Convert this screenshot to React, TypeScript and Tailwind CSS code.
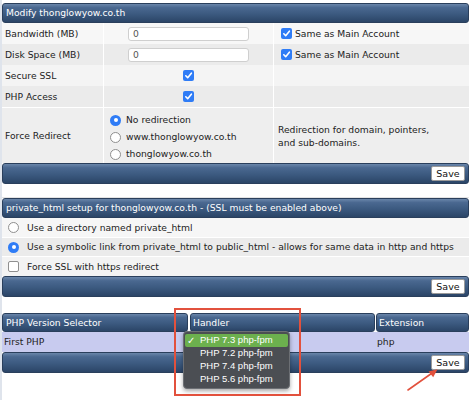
import React from "react";

const bar =
  "bg-[linear-gradient(to_bottom,#6a86aa_0%,#4a6890_20%,#3c5a80_55%,#2b4567_100%)] border border-[#2a3f5c] rounded-[3px]";

function Check({ on = true }: { on?: boolean }) {
  if (!on)
    return (
      <span className="inline-block w-[11px] h-[11px] rounded-[2px] bg-white border border-[#8f8f8f] shrink-0" />
    );
  return (
    <span className="inline-flex items-center justify-center w-[11px] h-[11px] rounded-[2px] bg-[#2f7cf6] shrink-0">
      <svg width="9" height="9" viewBox="0 0 10 10">
        <path d="M2 5.3 L4.1 7.4 L8.2 2.4" fill="none" stroke="white" strokeWidth="1.8" strokeLinecap="round" strokeLinejoin="round" />
      </svg>
    </span>
  );
}

function Radio({ on = false }: { on?: boolean }) {
  if (on)
    return (
      <span className="inline-flex items-center justify-center w-[11px] h-[11px] rounded-full bg-[#2f7cf6] shrink-0">
        <span className="w-[4px] h-[4px] rounded-full bg-white" />
      </span>
    );
  return <span className="inline-block w-[11px] h-[11px] rounded-full bg-white border border-[#8f8f8f] shrink-0" />;
}

function SaveBar() {
  return (
    <div className={`${bar} h-[21px] flex items-center justify-end pr-[3px]`}>
      <button className="h-[15px] w-[34px] bg-white border border-[#9a9a9a] rounded-[2px] text-[9.5px] text-[#111] leading-none">
        Save
      </button>
    </div>
  );
}

export default function App() {
  return (
    <div className="relative w-[471px] h-[400px] bg-white overflow-hidden font-['DejaVu_Sans',Verdana,sans-serif] text-[9.2px] text-[#222]">
      <div className="absolute left-0 top-0 bottom-0 w-[2px] bg-[#dfe4ec]" />
      <div className="pl-[2px] pr-[2px] pt-[3px]">
        {/* Section 1 */}
        <div className={`${bar} h-[20px] flex items-center pl-[3px] text-white`}>Modify thonglowyow.co.th</div>
        <div className="grid grid-cols-[102px_170px_1fr]">
          {/* Bandwidth */}
          <div className="h-[21px] bg-[#f7f7f7] border-r border-white flex items-center pl-[3px]">Bandwidth (MB)</div>
          <div className="h-[21px] bg-[#f7f7f7] border-r border-white flex items-center justify-center">
            <div className="w-[121px] h-[14px] bg-white border border-[#cfcfcf] rounded-[3px] flex items-center pl-[4px] text-[#555]">0</div>
          </div>
          <div className="h-[21px] bg-[#f7f7f7] flex items-center pl-[7px] gap-[3px]">
            <Check />
            <span>Same as Main Account</span>
          </div>
          {/* Disk */}
          <div className="h-[21px] bg-[#ebebeb] border-r border-white flex items-center pl-[3px]">Disk Space (MB)</div>
          <div className="h-[21px] bg-[#ebebeb] border-r border-white flex items-center justify-center">
            <div className="w-[121px] h-[14px] bg-white border border-[#cfcfcf] rounded-[3px] flex items-center pl-[4px] text-[#555]">0</div>
          </div>
          <div className="h-[21px] bg-[#ebebeb] flex items-center pl-[7px] gap-[3px]">
            <Check />
            <span>Same as Main Account</span>
          </div>
          {/* Secure SSL */}
          <div className="h-[21px] bg-[#f4f4f4] border-r border-white flex items-center pl-[3px]">Secure SSL</div>
          <div className="h-[21px] bg-[#f4f4f4] border-r border-white flex items-center justify-center">
            <Check />
          </div>
          <div className="h-[21px] bg-[#f4f4f4]" />
          {/* PHP Access */}
          <div className="h-[21px] bg-[#ebebeb] border-r border-white flex items-center pl-[3px]">PHP Access</div>
          <div className="h-[21px] bg-[#ebebeb] border-r border-white flex items-center justify-center">
            <Check />
          </div>
          <div className="h-[21px] bg-[#ebebeb]" />
          {/* Force Redirect */}
          <div className="h-[56px] bg-[#eeeeee] border-r border-white border-t flex items-center pl-[3px]">Force Redirect</div>
          <div className="h-[56px] bg-[#eeeeee] border-r border-white border-t flex flex-col justify-center pl-[6px] gap-[5px] pt-[3px]">
            <div className="flex items-center gap-[5px] h-[12px]">
              <Radio on />
              <span>No redirection</span>
            </div>
            <div className="flex items-center gap-[5px] h-[12px]">
              <Radio />
              <span>www.thonglowyow.co.th</span>
            </div>
            <div className="flex items-center gap-[5px] h-[12px]">
              <Radio />
              <span>thonglowyow.co.th</span>
            </div>
          </div>
          <div className="h-[56px] bg-[#eeeeee] border-t border-white flex items-center pl-[4px] leading-[13px]">
            <span>
              Redirection for domain, pointers,
              <br />
              and sub-domains.
            </span>
          </div>
        </div>
        <SaveBar />

        <div className="h-[14px] border-b border-[#e4e4e4]" />

        {/* Section 2 */}
        <div className={`${bar} h-[20px] flex items-center pl-[3px] text-white`}>
          private_html setup for thonglowyow.co.th - (SSL must be enabled above)
        </div>
        <div className="h-[19px] bg-[#f6f6f6] flex items-center pl-[6px] gap-[8px]">
          <Radio />
          <span>Use a directory named private_html</span>
        </div>
        <div className="h-[19px] bg-[#ebebeb] border-t border-white flex items-center pl-[6px] gap-[8px]">
          <Radio on />
          <span>Use a symbolic link from private_html to public_html - allows for same data in http and https</span>
        </div>
        <div className="h-[20px] bg-[#f3f3f3] border-t border-white flex items-center pl-[6px] gap-[8px]">
          <Check on={false} />
          <span>Force SSL with https redirect</span>
        </div>
        <SaveBar />

        <div className="h-[16px]" />

        {/* Section 3 */}
        <div className="flex h-[19px] text-white">
          <div className={`${bar} w-[186px] flex items-center pl-[3px]`}>PHP Version Selector</div>
          <div className={`${bar} w-[185px] ml-[2px] flex items-center pl-[2px]`}>Handler</div>
          <div className={`${bar} flex-1 ml-[1px] flex items-center pl-[2px]`}>Extension</div>
        </div>
        <div className="flex h-[20px] bg-[#c8cbef]">
          <div className="w-[186px] flex items-center pl-[2px]">First PHP</div>
          <div className="w-[187px]" />
          <div className="flex-1 flex items-center pl-[2px]">php</div>
        </div>
        <SaveBar />
      </div>

      {/* Dropdown overlay */}
      <div className="absolute left-[183px] top-[331px] w-[107px] h-[58px] bg-[#4b4e53] border border-[#6c6f74] rounded-[4px] shadow-[0_2px_4px_rgba(0,0,0,0.35)] pt-[2px] px-[1px] font-['Liberation_Sans',Arial,sans-serif] text-[9.5px] text-white font-medium">
        <div className="h-[13px] bg-[#6cb04e] rounded-[2px] flex items-center">
          <span className="w-[15px] pl-[2px] text-[10px]">✓</span>
          <span>PHP 7.3 php-fpm</span>
        </div>
        <div className="h-[13px] flex items-center pl-[15px]">PHP 7.2 php-fpm</div>
        <div className="h-[13px] flex items-center pl-[15px]">PHP 7.4 php-fpm</div>
        <div className="h-[13px] flex items-center pl-[15px]">PHP 5.6 php-fpm</div>
      </div>

      {/* Red highlight box */}
      <div className="absolute left-[174px] top-[308px] w-[127px] h-[88px] border-2 border-[#e2513d]" />

      {/* Red arrow */}
      <svg className="absolute left-[400px] top-[360px]" width="50" height="40" viewBox="0 0 50 40">
        <line x1="8" y1="30" x2="35" y2="11" stroke="#e2513d" strokeWidth="1.6" strokeLinecap="round" />
        <path d="M37.5 9.2 L28.5 11.6 L33.2 17.3 Z" fill="#e2513d" />
      </svg>
    </div>
  );
}
